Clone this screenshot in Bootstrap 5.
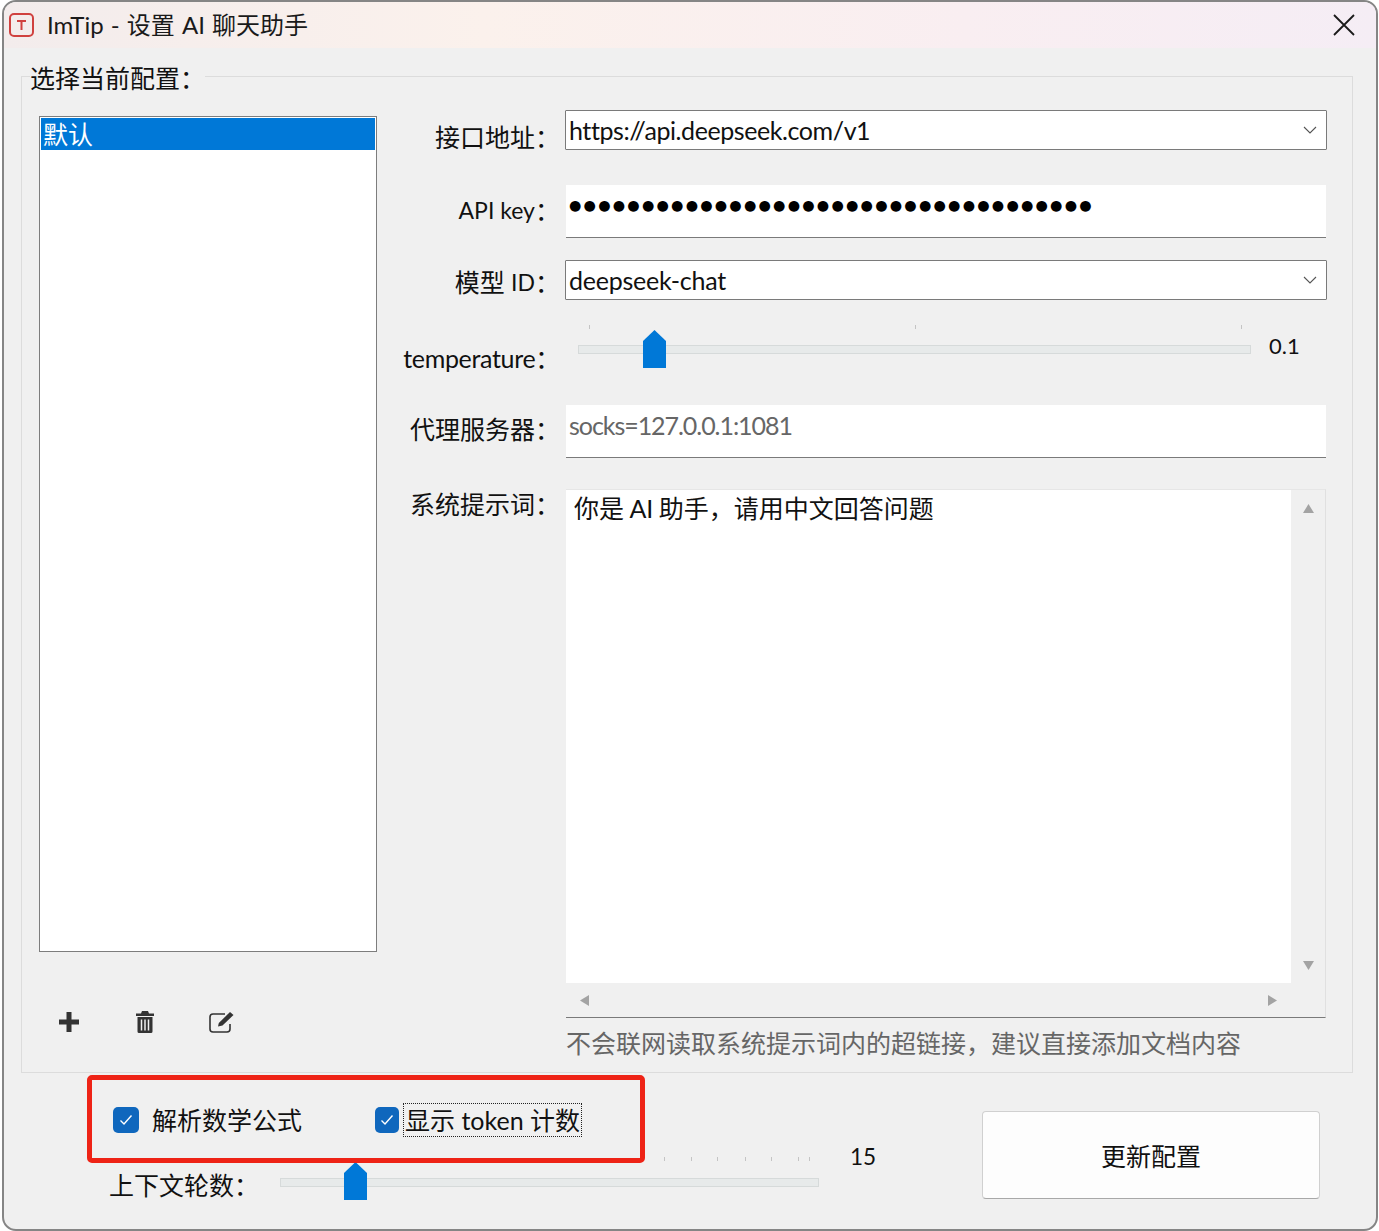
<!DOCTYPE html>
<html lang="zh-CN">
<head>
    <meta charset="UTF-8">
    <meta name="viewport" content="width=device-width, initial-scale=1.0">
    <title>ImTip - 设置 AI 聊天助手</title>
    <link href="https://cdn.jsdelivr.net/npm/bootstrap@5.3.3/dist/css/bootstrap.min.css" rel="stylesheet">
    <script src="https://cdn.jsdelivr.net/npm/bootstrap@5.3.3/dist/js/bootstrap.bundle.min.js"></script>
    <style>
        html, body {
            height: 100%;
            background-color: #fff;
            overflow: hidden;
        }
        body {
            font-family: Lato, "Noto Sans CJK SC", sans-serif;
            font-size: 25px;
            line-height: 32px;
            color: #111;
        }
        .app-window {
            position: relative;
            width: 1376px;
            height: 1231px;
            margin-left: 2px;
            background-color: #f0f0f0;
            border: 2px solid #858585;
            border-radius: 14px;
            overflow: hidden;
        }
        .title-bar {
            height: 46px;
            padding: 0 21px 0 5px;
            background: linear-gradient(90deg, #f3ecec 0%, #fbf1ec 35%, #f9eef1 70%, #f5edf5 100%);
        }
        .title-text {
            margin-left: 12px;
            font-size: 24px;
            word-spacing: 1px;
            color: #1a1a1a;
        }
        .config-group {
            margin: 9px 23px 0 17px;
            height: 1016px;
            padding: 0 25px 0 17px;
            border: 1px solid #dcdcdc;
            min-width: 0;
        }
        .config-group legend {
            float: none;
            width: auto;
            margin: 0 0 16px -9px;
            padding: 4px 0 0;
            font-size: 25px;
            line-height: 34px;
        }
        .left-side {
            width: 338px;
            margin-right: 27px;
            padding-top: 5px;
        }
        .config-list {
            height: 836px;
            border: 1px solid #7d7d7d;
            border-radius: 0;
            background: #fff;
            padding: 1px;
        }
        .config-list .list-group-item {
            padding: 0 2px;
            height: 32px;
            line-height: 32px;
            border: 0;
            border-radius: 0;
            background: #0078d7;
            color: #fff;
            font-size: 25px;
        }
        .tool-row {
            margin-top: 50px;
            padding-left: 20px;
            gap: 56px;
        }
        .tool-btn {
            width: 20px;
            height: 30px;
            padding: 0;
            border: 0;
            background: none;
            overflow: visible;
        }
        .tool-edit {
            margin-left: -2px;
        }
        .right-side {
            flex: 1;
            margin-top: -1px;
        }
        .form-line {
            display: flex;
        }
        .field-label {
            display: flex;
            justify-content: flex-end;
            width: 156px;
            height: 32px;
            flex: none;
            margin-right: 5px;
            padding-top: 11px;
            white-space: nowrap;
        }
        .label-api { padding-top: 9px; }
        .label-model { padding-top: 6px; }
        .label-temp { padding-top: 17px; letter-spacing: -.33px; }
        .label-proxy { padding-top: 8px; }
        .label-prompt { padding-top: 0; margin-top: -1px; }
        .latin-small {
            font-size: 23px;
            white-space: pre;
        }
        .combo-box {
            flex: 1;
            height: 40px;
            padding: 0 9px 0 3px;
            background: #fff;
            border: 1px solid #7a7a7a;
            border-radius: 1px;
            line-height: 38px;
        }
        .url-text {
            letter-spacing: -.42px;
        }
        .model-text {
            letter-spacing: -.25px;
        }
        .line-edit {
            flex: 1;
            height: 53px;
            margin: 0 1px;
            padding: 4px 3px 0;
            background: #fff;
            border-bottom: 1px solid #7a7a7a;
        }
        .pw-dots {
            font-family: "DejaVu Sans", sans-serif;
            font-size: 14.2px;
            line-height: 32px;
            letter-spacing: 2.2px;
            color: #000;
            white-space: nowrap;
        }
        .hint-text {
            color: #666;
            letter-spacing: -1.05px;
        }
        .mt-row-a { margin-top: 35px; }
        .mt-row-b { margin-top: 22px; }
        .mt-row-c { margin-top: 25px; }
        .mt-row-d { margin-top: 31px; }
        .mt-row-e { margin-top: 9px; }
        .slider-box {
            position: relative;
            height: 45px;
        }
        .temp-slider {
            flex: 1;
            margin: 0 0 0 13px;
        }
        .slider-track {
            position: absolute;
            left: 0;
            right: 0;
            top: 20px;
            height: 9px;
            background: #e7eaea;
            border: 1px solid #d6dada;
        }
        .slider-tick {
            position: absolute;
            top: 0;
            width: 1px;
            height: 4px;
            background: #c4c4c4;
        }
        .slider-thumb {
            position: absolute;
            width: 23px;
            height: 38px;
            top: 5px;
        }
        .slider-value {
            width: 76px;
            flex: none;
            padding-left: 18px;
            padding-top: 5px;
            font-size: 22px;
        }
        .text-editor {
            flex: 1;
            height: 529px;
            margin: 0 1px;
            border-top: 1px solid #e6e6e6;
            border-right: 1px solid #e0e0e0;
            border-bottom: 1px solid #7a7a7a;
            display: grid;
            grid-template-columns: 1fr 34px;
            grid-template-rows: 493px 34px;
        }
        .editor-body {
            padding: 2px 8px;
            background: #fff;
            word-spacing: -1px;
        }
        .scroll-v {
            padding: 14px 0 13px;
        }
        .scroll-h {
            padding: 0 14px;
        }
        .editor-hint {
            margin-left: 162px;
            color: #666;
        }
        .bottom-area {
            position: relative;
            padding: 30px 0 0;
        }
        .options-col {
            width: 840px;
            flex: none;
            margin-left: 109px;
        }
        .check-item {
            gap: 13px;
            height: 34px;
        }
        .check-box {
            width: 26px;
            height: 26px;
            border-radius: 5px;
            background: #0f67bd;
        }
        .check-second { margin-left: 73px; gap: 5px; }
        .check-second .check-box { width: 24px; }
        .focus-label {
            padding: 0 1px;
            outline: 1px dotted #222;
        }
        .context-row {
            margin-top: 20px;
        }
        .context-label {
            width: 171px;
            flex: none;
            padding-top: 12px;
            margin-left: -4px;
            white-space: nowrap;
        }
        .context-slider {
            width: 539px;
            flex: none;
            height: 50px;
        }
        .context-slider .slider-track {
            top: 21px;
        }
        .context-value {
            padding-left: 31px;
            line-height: 30px;
            margin-top: -15px;
            font-size: 22.5px;
        }
        .update-btn {
            width: 338px;
            height: 88px;
            flex: none;
            margin-left: 29px;
            margin-top: 8px;
            padding-top: 10px;
            background: #fdfdfd;
            border: 1px solid #d0d0d0;
            border-bottom-color: #a8a8a8;
            border-radius: 4px;
            color: #111;
            font-size: 25px;
        }
        .red-mark {
            position: absolute;
            left: 83px;
            top: 1073px;
            width: 558px;
            height: 88px;
            border: 5px solid #ee2316;
            border-radius: 5px;
            pointer-events: none;
        }
    </style>
</head>
<body>

    <div class="app-window">
        <div class="title-bar d-flex align-items-center">
            <svg width="26" height="26" viewBox="0 0 26 26" fill="none">
                <rect x="1" y="2" width="23" height="22" rx="4" stroke="#d0413f" stroke-width="2"/>
                <path d="M8 9h9M12.500 9v9" stroke="#d0413f" stroke-width="2"/>
            </svg>
            <span class="title-text">ImTip - 设置 AI 聊天助手</span>
            <svg class="ms-auto" width="22" height="22" viewBox="0 0 22 22" fill="none">
                <path d="M1 1l20 20M21 1L1 21" stroke="#1a1a1a" stroke-width="1.8"/>
            </svg>
        </div>

        <fieldset class="config-group">
            <legend>选择当前配置：</legend>
            <div class="d-flex">
                <div class="left-side">
                    <ul class="list-group config-list">
                        <li class="list-group-item">默认</li>
                    </ul>
                    <div class="d-flex tool-row">
                        <button class="tool-btn" type="button">
                            <svg width="20" height="20" viewBox="0 0 20 20"><path d="M7.500 0h5v7.500H20v5h-7.500V20h-5v-7.500H0v-5h7.500z" fill="#333"/></svg>
                        </button>
                        <button class="tool-btn" type="button">
                            <svg width="20" height="22" viewBox="0 0 20 22"><path d="M7 0h6l1 2.500h5V5H1V2.500h5zM2.500 6h15v14.500a1.500 1.500 0 0 1-1.500 1.500H4a1.500 1.500 0 0 1-1.500-1.500z" fill="#333"/><path d="M6.500 8.500v11M10 8.500v11M13.500 8.500v11" stroke="#f0f0f0" stroke-width="1.500"/></svg>
                        </button>
                        <button class="tool-btn tool-edit" type="button">
                            <svg width="27" height="22" viewBox="0 0 27 22" fill="none"><path d="M21 13v5a3 3 0 0 1-3 3H4a3 3 0 0 1-3-3V6a3 3 0 0 1 3-3h12" stroke="#333" stroke-width="1.600"/><path d="M9 15.500l.8-3.500L21 1l3.500 3L13.500 14.500z" fill="#333"/></svg>
                        </button>
                    </div>
                </div>

                <div class="right-side">
                    <div class="form-line">
                        <div class="field-label">接口地址：</div>
                        <div class="combo-box d-flex align-items-center justify-content-between">
                            <span class="url-text">https://api.deepseek.com/v1</span>
                            <svg width="14" height="8" viewBox="0 0 14 8" fill="none"><path d="M1 1l6 6 6-6" stroke="#555" stroke-width="1.100"/></svg>
                        </div>
                    </div>
                    <div class="form-line mt-row-a">
                        <div class="field-label label-api"><span class="latin-small">API key</span>：</div>
                        <div class="line-edit"><div class="pw-dots">●●●●●●●●●●●●●●●●●●●●●●●●●●●●●●●●●●●●</div></div>
                    </div>
                    <div class="form-line mt-row-b">
                        <div class="field-label label-model">模型&nbsp;<span class="latin-small">ID</span>：</div>
                        <div class="combo-box d-flex align-items-center justify-content-between">
                            <span class="model-text">deepseek-chat</span>
                            <svg width="14" height="8" viewBox="0 0 14 8" fill="none"><path d="M1 1l6 6 6-6" stroke="#555" stroke-width="1.100"/></svg>
                        </div>
                    </div>
                    <div class="form-line mt-row-c">
                        <div class="field-label label-temp">temperature：</div>
                        <div class="slider-box temp-slider">
                            <span class="slider-tick" style="left: 11px"></span>
                            <span class="slider-tick" style="left: 337px"></span>
                            <span class="slider-tick" style="left: 663px"></span>
                            <div class="slider-track"></div>
                            <svg class="slider-thumb" style="left: 65px" viewBox="0 0 23 38"><path d="M0 11L11.500 0 23 11v27H0z" fill="#0078d7"/></svg>
                        </div>
                        <div class="slider-value">0.1</div>
                    </div>
                    <div class="form-line mt-row-a">
                        <div class="field-label label-proxy">代理服务器：</div>
                        <div class="line-edit hint-text">socks=127.0.0.1:1081</div>
                    </div>
                    <div class="form-line mt-row-d">
                        <div class="field-label label-prompt">系统提示词：</div>
                        <div class="text-editor">
                            <div class="editor-body">你是 AI 助手，请用中文回答问题</div>
                            <div class="scroll-v d-flex flex-column justify-content-between align-items-center">
                                <svg width="11" height="9" viewBox="0 0 11 9"><path d="M5.500 0L11 9H0z" fill="#a3a3a3"/></svg>
                                <svg width="11" height="9" viewBox="0 0 11 9"><path d="M5.500 9L11 0H0z" fill="#a3a3a3"/></svg>
                            </div>
                            <div class="scroll-h d-flex align-items-center justify-content-between">
                                <svg width="9" height="11" viewBox="0 0 9 11"><path d="M0 5.500L9 0v11z" fill="#a3a3a3"/></svg>
                                <svg width="9" height="11" viewBox="0 0 9 11"><path d="M9 5.500L0 0v11z" fill="#a3a3a3"/></svg>
                            </div>
                            <div></div>
                        </div>
                    </div>
                    <div class="editor-hint mt-row-e">不会联网读取系统提示词内的超链接，建议直接添加文档内容</div>
                </div>
            </div>
        </fieldset>

        <div class="bottom-area d-flex">
            <div class="options-col">
                <div class="d-flex">
                    <div class="check-item d-flex align-items-center">
                        <span class="check-box d-flex align-items-center justify-content-center">
                            <svg width="14" height="12" viewBox="0 0 14 12" fill="none"><path d="M1.500 6.500l3.500 3.500 7.500-8.500" stroke="#fff" stroke-width="1.400"/></svg>
                        </span>
                        <span>解析数学公式</span>
                    </div>
                    <div class="check-item check-second d-flex align-items-center">
                        <span class="check-box d-flex align-items-center justify-content-center">
                            <svg width="14" height="12" viewBox="0 0 14 12" fill="none"><path d="M1.500 6.500l3.500 3.500 7.500-8.500" stroke="#fff" stroke-width="1.400"/></svg>
                        </span>
                        <span class="focus-label">显示 token 计数</span>
                    </div>
                </div>
                <div class="d-flex context-row">
                    <div class="context-label">上下文轮数：</div>
                    <div class="slider-box context-slider">
                        <span class="slider-tick" style="left: 384px"></span>
                        <span class="slider-tick" style="left: 411px"></span>
                        <span class="slider-tick" style="left: 437px"></span>
                        <span class="slider-tick" style="left: 465px"></span>
                        <span class="slider-tick" style="left: 491px"></span>
                        <span class="slider-tick" style="left: 518px"></span>
                        <span class="slider-tick" style="left: 529px"></span>
                        <div class="slider-track"></div>
                        <svg class="slider-thumb" style="left: 64px" viewBox="0 0 23 38"><path d="M0 11L11.500 0 23 11v27H0z" fill="#0078d7"/></svg>
                    </div>
                    <div class="context-value">15</div>
                </div>
            </div>
            <button class="btn update-btn" type="button">更新配置</button>
        </div>

        <div class="red-mark"></div>
    </div>

</body>
</html>
